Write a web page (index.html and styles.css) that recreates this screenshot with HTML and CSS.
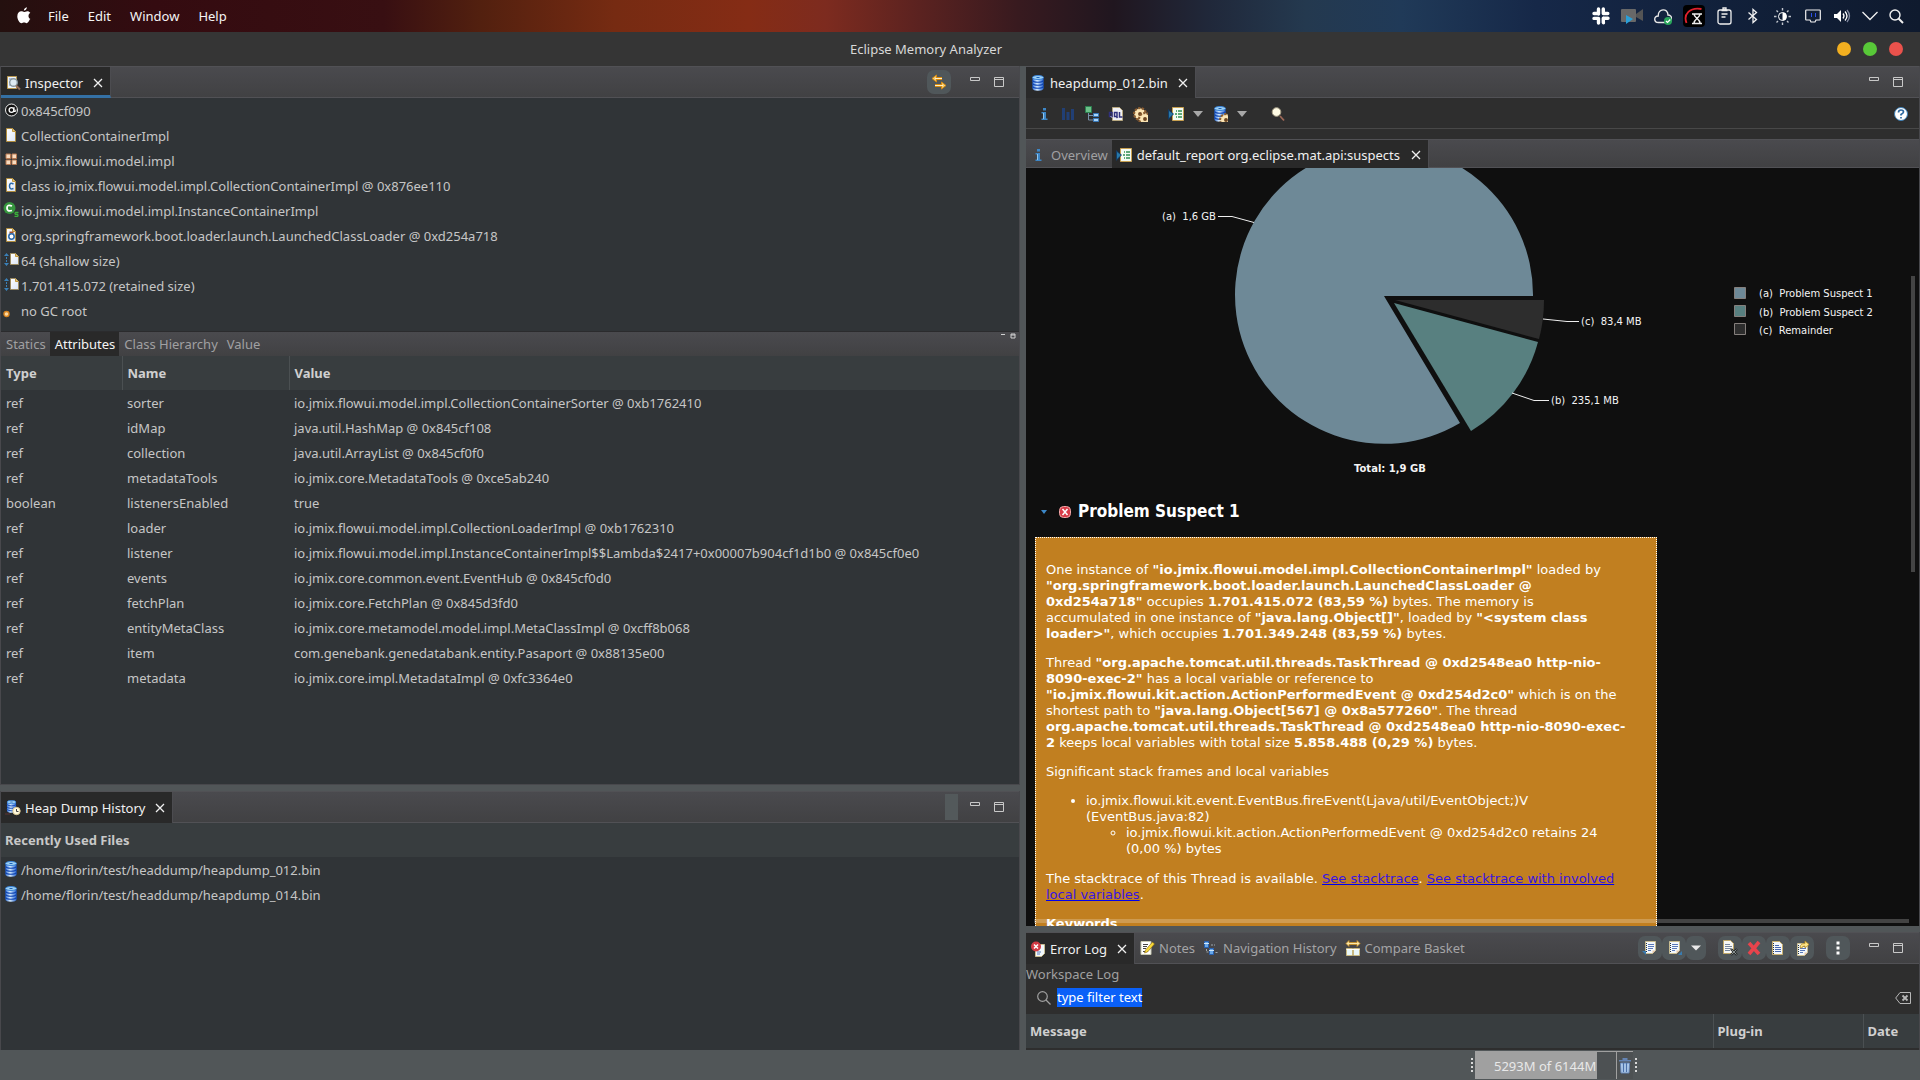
FILE: index.html
```
<!DOCTYPE html>
<html lang="en">
<head>
<meta charset="utf-8">
<title>Eclipse Memory Analyzer</title>
<link rel="stylesheet" href="styles.css">
</head>
<body>
<svg class="sprites" aria-hidden="true">
  <defs>
    <linearGradient id="paper" x1="0" y1="0" x2="1" y2="1"><stop offset="0" stop-color="#fff"/><stop offset="1" stop-color="#dbe6f8"/></linearGradient>
    <linearGradient id="cyl" x1="0" x2="1"><stop offset="0" stop-color="#2f6fd8"/><stop offset=".4" stop-color="#d6ecff"/><stop offset="1" stop-color="#2463cf"/></linearGradient>
  </defs>
  <symbol id="close" viewBox="0 0 10 10"><path d="M1 1l8 8M9 1l-8 8" stroke="#f0f0f0" stroke-width="1.3" fill="none"/></symbol>
  <symbol id="min" viewBox="0 0 10 10"><path d="M.5 .5h9v3h-9z" stroke="#c8c8c8" fill="none"/></symbol>
  <symbol id="max" viewBox="0 0 10 10"><path d="M.5 .5h9v9h-9zM0 2.5h10" stroke="#c8c8c8" fill="none"/></symbol>
  <symbol id="page" viewBox="0 0 16 16"><path d="M3.500 1.500h6l3 3v10h-9z" fill="url(#paper)" stroke="#b08c3c"/><path d="M9.500 1.500v3h3" fill="#e8c878" stroke="#c09840"/></symbol>
  <symbol id="db" viewBox="0 0 16 16">
    <path d="M2.500 2.500v11c0 3 11 3 11 0v-11z" fill="url(#cyl)"/>
    <path d="M2.500 5.500c1 2.300 10 2.300 11 0M2.500 8.500c1 2.300 10 2.300 11 0M2.500 11.500c1 2.300 10 2.300 11 0" stroke="#1146b4" stroke-width="1.200" fill="none"/>
    <ellipse cx="8" cy="2.500" rx="5.500" ry="2" fill="#9cd0f4" stroke="#3a84d8"/><path d="M6.500 2.500h3" stroke="#1f62b8"/>
  </symbol>
  <symbol id="info" viewBox="0 0 16 16"><path d="M7 2h3v2.500h-3zM5.500 6h4.500v6.500h1.500v1.500h-6v-1.500h1.500v-5h-1.500z" fill="#3d86c6"/><path d="M7.500 7v6" stroke="#8cc4ee"/></symbol>
  <symbol id="report" viewBox="0 0 16 16"><path d="M4.500 1.500h11v13h-11z" fill="#f4fbf4" stroke="#c8a050"/><path d="M8 5h1m1 0h4M7 8h2m1 0h4M8 11h1m1 0h4" stroke="#2e8f50" stroke-width="1.300"/><path d="M0 3l6 5-6 6z" fill="#123c66"/><path d="M1 5l4 3-4 4z" fill="#2878a8"/></symbol>
  <symbol id="gear" viewBox="0 0 10 10"><circle cx="5" cy="5" r="3.600" fill="#fbe5b4" stroke="#8a5c30" stroke-width="1.600" stroke-dasharray="1.400 .8"/><circle cx="5" cy="5" r="3" fill="#fbe5b4"/><circle cx="5" cy="5" r="1.200" fill="#6c4420"/></symbol>
  <symbol id="down" viewBox="0 0 10 6"><path d="M0 0h10l-5 6z" fill="#a8a8a8"/></symbol>
  <symbol id="log" viewBox="0 0 16 16"><path d="M3.500 1.500h10v9l-3 3h-7z" fill="#f2f8fc" stroke="#c9bd90"/><path d="M6 4.500h6M6 6.500h6M6 8.500h5M6 10.500h3" stroke="#5878b8"/><path d="M4.500 3v10" stroke="#234" stroke-dasharray="1 1"/><path d="M13.500 10.500h-3v3z" fill="#e8c8a8"/></symbol>
  <symbol id="size" viewBox="0 0 16 16"><path d="M7.500 1.500h5l3 3v8h-8z" fill="url(#paper)" stroke="#9c8c64"/><path d="M12.500 1.500v3h3" fill="#e8c878" stroke="#c09840"/><path d="M3.500 2v11" stroke="#3a80b8" stroke-dasharray="2 1"/><path d="M1 4l2.500-3 2.500 3zM1 11l2.500 3 2.500-3z" fill="#3a80b8"/></symbol>
</svg>

<header class="menubar">
  <nav class="menus">
    <button aria-label="System"><svg width="14" height="17" viewBox="0 0 14 17"><path d="M9.900.3c.1 1.400-1.300 3.300-3 3.300C6.700 2.100 8.200.5 9.900.3zM12.700 12.600c-.7 1.800-1.900 3.600-3.100 3.600-1 0-1.300-.6-2.500-.6s-1.600.6-2.500.6C2.700 16.200.3 12.600.3 9.200c0-3.100 2-4.900 4-4.900 1.200 0 2 .7 2.800.7s1.700-.8 3.200-.8c1.200 0 2.300.6 3 1.600-2.600 1.500-2.200 5.500.1 6.200z" fill="#fff"/></svg></button>
    <button>File</button><button>Edit</button><button>Window</button><button>Help</button>
  </nav>
  <div class="tray">
    <svg width="18" height="20" viewBox="1 0 18 20"><g stroke="#fff" stroke-width="3.400" stroke-linecap="round"><path d="M7.500 3v5M3 7.500h.1M12.300 3v4.500M16.800 7.500h-4.300M12.500 12.300h4.500M12.500 16.800v-.1M7.500 12.500v4.500M3 12.400h4.500M3 7.500h4.500M12.300 12.300v4.300"/></g></svg>
    <svg width="22" height="18" viewBox="0 0 22 18"><rect y="2" width="15" height="13" rx="1" fill="#686868"/><path d="M15 7l7-5v12l-7-4z" fill="#555"/><path d="M5 8l7 4-7 5z" fill="#2a9fd8"/></svg>
    <svg width="18" height="17" viewBox="0 0 18 17"><path d="M4.500 14.500c-5 0-5-6.500-.3-6.500C4 0 14 0 14 7c5 0 4.500 7.500 0 7.500z" fill="none" stroke="#e8e8e8" stroke-width="1.400"/><circle cx="14" cy="13" r="4" fill="#27a55a"/><path d="M12 13l1.500 1.500 2.800-3" stroke="#fff" stroke-width="1.200" fill="none"/></svg>
    <svg width="22" height="22" viewBox="0 0 22 22"><rect width="22" height="22" rx="4" fill="#000"/><path d="M3.500 18C0 9 7 2 18.500 4" stroke="#e0202c" stroke-width="1.800" fill="none"/><path d="M9 9h10M9 18.500h10M11 9c0 4 6 5 6 9M17 9c0 4-6 5-6 9" stroke="#eee" stroke-width="1.500" fill="none"/></svg>
    <svg width="18" height="18" viewBox="-1 0 18 18"><rect x="1" y="3" width="13" height="14" rx="2" fill="none" stroke="#f0f0f0" stroke-width="1.300"/><path d="M4.500 3.500h6M6 1h3v2H6zM4.500 7h6M4.500 10h4" stroke="#f0f0f0" stroke-width="1.300" fill="none"/></svg>
    <svg width="16" height="16" viewBox="-2 0 16 16"><path d="M1.500 4.500l8 7-3.500 3V1.500l3.500 3-8 7" fill="none" stroke="#f0f0f0" stroke-width="1.300"/></svg>
    <svg width="21" height="17" viewBox="-2 0 21 17"><circle cx="8.500" cy="8.500" r="4" fill="none" stroke="#fff"/><path d="M8.500 4.500a4 4 0 0 1 0 8z" fill="#fff"/><path d="M8.500 0v2.500M8.500 14.500V17M0 8.500h2.500M14.500 8.500H17M2.500 2.500l1.500 1.500M13 13l1.500 1.500M14.500 2.500L13 4M4 13l-1.500 1.500" stroke="#c0c4cc" stroke-width="1.400"/></svg>
    <svg width="18" height="16" viewBox="-1 0 18 16"><path d="M1.500 2h13q.8 0 .8.800v8.400q0 .8-.8.800h-3.500l-1 2h-4l-1-2H1.500q-.8 0-.8-.8V2.800q0-.8.8-.8z" fill="none" stroke="#f0f0f0" stroke-width="1.200"/><path d="M6.500 5v4M10.500 5v4" stroke="#2d50e8"/></svg>
    <svg width="18" height="14" viewBox="0 0 18 14"><path d="M1 5h3l4-4v12l-4-4h-3z" fill="#fff"/><path d="M10 4.500q2 2.500 0 5M12 2.500q4 4.500 0 9" stroke="#fff" stroke-width="1.300" fill="none"/><path d="M14 1q5 6 0 12" stroke="#8089a0" stroke-width="1.300" fill="none"/></svg>
    <svg width="16" height="10" viewBox="0 0 16 10"><path d="M.5 1L8 8.500 15.500 1" fill="none" stroke="#f0f0f0" stroke-width="1.300"/></svg>
    <svg width="15" height="15" viewBox="0 0 15 15"><circle cx="6" cy="6" r="5" fill="none" stroke="#f0f0f0" stroke-width="1.400"/><path d="M9.500 9.500L14 14" stroke="#f0f0f0" stroke-width="2"/></svg>
  </div>
</header>

<div class="titlebar">
  <h1>Eclipse Memory Analyzer</h1>
  <div class="lights"><button class="amber" aria-label="Minimize window"></button><button class="green" aria-label="Maximize window"></button><button class="red" aria-label="Close window"></button></div>
</div>

<main class="workbench">
  <div class="column left">
    <section class="view inspector">
      <div class="tabbar">
        <div class="tab active focus"><svg width="16" height="16" viewBox="0 0 16 16"><path d="M2.500 1.500h9v12h-9z" fill="#eef4fc" stroke="#b89850"/><path d="M4 4h3M4 7h2M4 10h3" stroke="#6a8cc0"/><circle cx="8.500" cy="7.500" r="3.800" fill="#dfeaf2" stroke="#8a98a0" stroke-width="1.400"/><path d="M11 10.500l4 4" stroke="#96705c" stroke-width="2"/></svg><button>Inspector</button><button class="x" aria-label="Close"><svg><use href="#close"/></svg></button></div>
        <div class="tools"><button class="tool swap" aria-label="Link with snapshot"><svg width="16" height="16" viewBox="0 0 16 16"><path d="M5 4.500h6M4 11.500h7" stroke="#d88c10" stroke-width="3"/><path d="M1 4.500L5.500 1v7zM15 11.500L10.500 8v7z" fill="#f4cc70" stroke="#d88c10"/><path d="M4 4.500h7M4 11.500h8" stroke="#fff0c8"/></svg></button><button class="winbtn" aria-label="Minimize"><svg><use href="#min"/></svg></button><button class="winbtn" aria-label="Maximize"><svg><use href="#max"/></svg></button></div>
      </div>
      <ul class="tree">
        <li><svg viewBox="0 0 16 16"><circle cx="8.500" cy="8" r="6" fill="#111" stroke="#eee"/><circle cx="8.500" cy="8" r="2.400" fill="none" stroke="#fff" stroke-width="1.300"/><path d="M11 5v4.500q2 1 2-2" stroke="#fff" fill="none"/></svg>0x845cf090</li>
        <li><svg><use href="#page"/></svg>CollectionContainerImpl</li>
        <li><svg viewBox="0 0 16 16"><path d="M3 2h4.500v4.500H3zM9 2h4.500v4.500H9zM3 8h4.500v4.500H3zM9 8h4.500v4.500H9z" fill="#f8dcc0" stroke="#b87850"/></svg>io.jmix.flowui.model.impl</li>
        <li><svg viewBox="0 0 16 16"><use href="#page"/><path d="M10.500 7q-4-2-4 2t4 2.500" stroke="#2868a8" stroke-width="1.500" fill="none"/></svg>class io.jmix.flowui.model.impl.CollectionContainerImpl @ 0x876ee110</li>
        <li><svg viewBox="0 0 16 16"><circle cx="6.500" cy="6" r="6" fill="#36963e"/><path d="M9 4q-5-2-5 2t5 2.500" stroke="#fff" stroke-width="1.800" fill="none"/><path d="M15.500 10.500h-3q-1 1 0 1.800h2q1 1.200 0 2h-3" stroke="#3ab03a" stroke-width="1.300" fill="none"/></svg>io.jmix.flowui.model.impl.InstanceContainerImpl</li>
        <li><svg viewBox="0 0 16 16"><use href="#page"/><path d="M6.500 4.500h4v2h-4z" fill="#9c4c28"/><circle cx="8.500" cy="9.500" r="2.700" fill="#fff" stroke="#2868a8" stroke-width="1.500"/></svg>org.springframework.boot.loader.launch.LaunchedClassLoader @ 0xd254a718</li>
        <li><svg><use href="#size"/></svg>64 (shallow size)</li>
        <li><svg><use href="#size"/></svg>1.701.415.072 (retained size)</li>
        <li><svg viewBox="0 0 16 16"><circle cx="3.500" cy="12" r="2.500" fill="#fcd8a0" stroke="#d88420" stroke-width="1.400"/></svg>no GC root</li>
      </ul>
      <div class="subtabs"><button>Statics</button><button class="active">Attributes</button><button>Class Hierarchy</button><button>Value</button><span class="mini"><svg width="16" height="6" viewBox="0 0 16 6"><path d="M1 1.500h4M11 1h4v4h-4zM11 2h4" stroke="#d0d0d0" fill="none"/></svg></span></div>
      <div class="grid">
      <table>
        <colgroup><col class="c-type"><col class="c-name"><col></colgroup>
        <thead><tr><th>Type</th><th>Name</th><th>Value</th></tr></thead>
        <tbody>
          <tr><td>ref</td><td>sorter</td><td>io.jmix.flowui.model.impl.CollectionContainerSorter @ 0xb1762410</td></tr>
          <tr><td>ref</td><td>idMap</td><td>java.util.HashMap @ 0x845cf108</td></tr>
          <tr><td>ref</td><td>collection</td><td>java.util.ArrayList @ 0x845cf0f0</td></tr>
          <tr><td>ref</td><td>metadataTools</td><td>io.jmix.core.MetadataTools @ 0xce5ab240</td></tr>
          <tr><td>boolean</td><td>listenersEnabled</td><td>true</td></tr>
          <tr><td>ref</td><td>loader</td><td>io.jmix.flowui.model.impl.CollectionLoaderImpl @ 0xb1762310</td></tr>
          <tr><td>ref</td><td>listener</td><td>io.jmix.flowui.model.impl.InstanceContainerImpl$$Lambda$2417+0x00007b904cf1d1b0 @ 0x845cf0e0</td></tr>
          <tr><td>ref</td><td>events</td><td>io.jmix.core.common.event.EventHub @ 0x845cf0d0</td></tr>
          <tr><td>ref</td><td>fetchPlan</td><td>io.jmix.core.FetchPlan @ 0x845d3fd0</td></tr>
          <tr><td>ref</td><td>entityMetaClass</td><td>io.jmix.core.metamodel.model.impl.MetaClassImpl @ 0xcff8b068</td></tr>
          <tr><td>ref</td><td>item</td><td>com.genebank.genedatabank.entity.Pasaport @ 0x88135e00</td></tr>
          <tr><td>ref</td><td>metadata</td><td>io.jmix.core.impl.MetadataImpl @ 0xfc3364e0</td></tr>
        </tbody>
      </table>
      </div>
    </section>

    <section class="view history">
      <div class="tabbar">
        <div class="tab active"><svg width="16" height="16" viewBox="0 0 16 16"><svg width="13" height="13"><use href="#db"/></svg><circle cx="11.500" cy="11" r="3.700" fill="#fff8dc" stroke="#d8c890"/><path d="M11.500 9v2.500h2" stroke="#444" fill="none"/><path d="M0 14h5" stroke="#5c3434"/></svg><button>Heap Dump History</button><button class="x" aria-label="Close"><svg><use href="#close"/></svg></button></div>
        <div class="tools"><span class="stub"></span><button class="winbtn" aria-label="Minimize"><svg><use href="#min"/></svg></button><button class="winbtn" aria-label="Maximize"><svg><use href="#max"/></svg></button></div>
      </div>
      <h2 class="listhead">Recently Used Files</h2>
      <ul class="tree files">
        <li><svg><use href="#db"/></svg>/home/florin/test/headdump/heapdump_012.bin</li>
        <li><svg><use href="#db"/></svg>/home/florin/test/headdump/heapdump_014.bin</li>
      </ul>
    </section>
  </div>

  <div class="column right">
    <section class="view editor">
      <div class="tabbar">
        <div class="tab active"><svg width="16" height="16"><use href="#db"/></svg><button>heapdump_012.bin</button><button class="x" aria-label="Close"><svg><use href="#close"/></svg></button></div>
        <div class="tools"><button class="winbtn" aria-label="Minimize"><svg><use href="#min"/></svg></button><button class="winbtn" aria-label="Maximize"><svg><use href="#max"/></svg></button></div>
      </div>
      <div class="toolbar">
        <button aria-label="Overview"><svg><use href="#info"/></svg></button>
        <button aria-label="Histogram"><svg viewBox="0 0 16 16"><path d="M2 2h3v12h-3zM6.500 6h3v8h-3zM11 3h3v11h-3z" fill="#213f74"/></svg></button>
        <button aria-label="Dominator tree"><svg viewBox="0 0 16 16"><path d="M4.500 7v7h5M4.500 9.500h5" stroke="#7890a8" fill="none"/><path d="M1.500 .5h6v6h-6z" fill="#6cc088" stroke="#2c8050"/><path d="M9.500 7.500h5v3h-5zM9.500 12.500h5v3h-5z" fill="#a8d4f8" stroke="#3878b8"/></svg></button>
        <button aria-label="OQL"><svg viewBox="0 0 16 16"><path d="M4.500 1.500h7l3 3v10h-10z" fill="#f0f0f4" stroke="#b8a880"/><path d="M1.500 6.500h2.500v4h-2.500zM6.500 6.500h2.500v4h-2.500zM8 10l1.500 2M11.500 6v5h3" stroke="#30307c" stroke-width="1.500" fill="none"/><path d="M2.500 10l2 2" stroke="#b8b8e0"/></svg></button>
        <button class="wide" aria-label="Thread overview"><svg viewBox="0 0 16 16"><svg width="11" height="11"><use href="#gear"/></svg><svg x="5" y="5" width="11" height="11"><use href="#gear"/></svg></svg></button>
        <button aria-label="Run report"><svg><use href="#report"/></svg></button>
        <button class="drop" aria-label="Report menu"><svg><use href="#down"/></svg></button>
        <button aria-label="Query browser"><svg viewBox="0 0 16 16"><svg width="13" height="14"><use href="#db"/></svg><svg x="6" y="6" width="10" height="10"><use href="#gear"/></svg></svg></button>
        <button class="drop last" aria-label="Query menu"><svg><use href="#down"/></svg></button>
        <button aria-label="Find object"><svg viewBox="0 0 16 16"><circle cx="6.500" cy="6" r="4.300" fill="#fffbe4" stroke="#a8a088"/><path d="M10 10l4 4.500" stroke="#9c6858" stroke-width="1.800"/></svg></button>
        <button class="help" aria-label="Help"><svg viewBox="0 0 16 16"><circle cx="8" cy="8" r="6.500" fill="#fff" stroke="#3c80b8"/><path d="M5.500 6.500q0-2.500 2.500-2.500t2.500 2q0 1-2.500 2.500v1M8 11v1.500" stroke="#2c68a0" stroke-width="1.700" fill="none"/></svg></button>
      </div>
      <div class="pagetabs">
        <div class="tab"><svg width="16" height="16"><use href="#info"/></svg><button>Overview</button></div>
        <div class="tab active"><svg width="16" height="16"><use href="#report"/></svg><button>default_report org.eclipse.mat.api:suspects</button><button class="x" aria-label="Close"><svg><use href="#close"/></svg></button></div>
      </div>
      <div class="browser">
        <svg class="chart" width="880" height="320" viewBox="0 0 880 320" role="img" aria-label="Leak suspects">
          <path d="M358 128H507A149 149 0 1 0 434 255z" fill="#6e8997"/>
          <path d="M368 135L512 174A149 149 0 0 1 445 263z" fill="#588080"/>
          <path d="M369 132H518A149 149 0 0 1 513 171z" fill="#2d2d2d"/>
          <path d="M192 48.500h14l22 6M517 151l24 2.500h12M486 225l22 7.500h15" fill="none" stroke="#eee"/>
          <path d="M708.500 119.500h11v11h-11z" fill="#6e8997" stroke="#857f7c"/>
          <path d="M708.500 137.500h11v11h-11z" fill="#588080" stroke="#857f7c"/>
          <path d="M708.500 155.500h11v11h-11z" fill="#2d2d2d" stroke="#857f7c"/>
          <g class="labels">
            <text x="136" y="52">(a)&nbsp; 1,6 GB</text><text x="555" y="157">(c)&nbsp; 83,4 MB</text><text x="525" y="236">(b)&nbsp; 235,1 MB</text>
            <text x="733" y="129">(a)&nbsp; Problem Suspect 1</text><text x="733" y="148">(b)&nbsp; Problem Suspect 2</text><text x="733" y="166">(c)&nbsp; Remainder</text>
            <text class="total" x="328" y="304">Total: 1,9 GB</text>
          </g>
        </svg>
        <h2><svg width="6" height="4" viewBox="0 0 6 4"><path d="M0 0h6l-3 4z" fill="#3c88c8"/></svg><svg width="12" height="12" viewBox="0 0 12 12"><rect x=".5" y=".5" width="11" height="11" rx="4" fill="#d83c48" stroke="#f0a8a8"/><path d="M3.500 3l5 6M8.500 3l-5 6" stroke="#fff" stroke-width="1.500"/></svg>Problem Suspect 1</h2>
        <article class="suspect">
          <p>One instance of <b>"io.jmix.flowui.model.impl.CollectionContainerImpl"</b> loaded by<br><b>"org.springframework.boot.loader.launch.LaunchedClassLoader @<br>0xd254a718"</b> occupies <b>1.701.415.072 (83,59 %)</b> bytes. The memory is<br>accumulated in one instance of <b>"java.lang.Object[]"</b>, loaded by <b>"&lt;system class<br>loader&gt;"</b>, which occupies <b>1.701.349.248 (83,59 %)</b> bytes.</p>
          <p>Thread <b>"org.apache.tomcat.util.threads.TaskThread @ 0xd2548ea0 http-nio-<br>8090-exec-2"</b> has a local variable or reference to<br><b>"io.jmix.flowui.kit.action.ActionPerformedEvent @ 0xd254d2c0"</b> which is on the<br>shortest path to <b>"java.lang.Object[567] @ 0x8a577260"</b>. The thread<br><b>org.apache.tomcat.util.threads.TaskThread @ 0xd2548ea0 http-nio-8090-exec-<br>2</b> keeps local variables with total size <b>5.858.488 (0,29 %)</b> bytes.</p>
          <p>Significant stack frames and local variables</p>
          <ul><li>io.jmix.flowui.kit.event.EventBus.fireEvent(Ljava/util/EventObject;)V<br>(EventBus.java:82)
            <ul><li>io.jmix.flowui.kit.action.ActionPerformedEvent @ 0xd254d2c0 retains 24<br>(0,00 %) bytes</li></ul></li></ul>
          <p>The stacktrace of this Thread is available. <a href="#stack">See stacktrace</a>. <a href="#locals">See stacktrace with involved<br>local variables</a>.</p>
          <p><b>Keywords</b></p>
        </article>
        <span class="vbar"></span><span class="hbar"></span>
      </div>
    </section>

    <section class="view errors">
      <div class="tabbar">
        <div class="tab active"><svg width="16" height="16" viewBox="0 0 16 16"><path d="M5.500 3.500h9v9l-3 3h-6z" fill="#f2f8fc" stroke="#c9bd90"/><path d="M7 11h4M7 13h3" stroke="#5878b8"/><circle cx="6" cy="5.500" r="5" fill="#d23a44"/><path d="M4 3.500l4 4M8 3.500l-4 4" stroke="#fff" stroke-width="1.500"/></svg><button>Error Log</button><button class="x" aria-label="Close"><svg><use href="#close"/></svg></button></div>
        <div class="tab"><svg width="16" height="16" viewBox="0 0 16 16"><path d="M2 1.500h10v13h-10z" fill="#fff" stroke="#c8c8b0"/><path d="M4 4.500h5M4 6.500h4M4 8.500h3M4 11.500h5" stroke="#444"/><path d="M13.500 2l2 2-7 8-3 1 1-3z" fill="#f8d838" stroke="#806010" stroke-width=".6"/></svg><button>Notes</button></div>
        <div class="tab"><svg width="16" height="16" viewBox="0 0 16 16"><path d="M1.500 1.500h4v6h-4zM6.500 8.500h4v6h-4z" fill="#68a8e8" stroke="#2860b0"/><path d="M1 3.500h5M6 10.500h5" stroke="#cfe6fa"/><path d="M8 5h4M3.500 9v3h2M12.500 12.500h3" stroke="#a0a8b0" stroke-dasharray="2 1" fill="none"/></svg><button>Navigation History</button></div>
        <div class="tab"><svg width="16" height="16" viewBox="0 0 16 16"><path d="M1 3.500L4 .5v2h8v-2l3 3-3 3v-2H4v2z" fill="#fce8a8" stroke="#c88c20" stroke-width=".8"/><path d="M1.500 8.500h6v7h-6zM8.500 8.500h6v7h-6z" fill="#e8f6f8" stroke="#c8b880"/><path d="M1.500 9.500h13" stroke="#fff"/></svg><button>Compare Basket</button></div>
        <div class="tools">
          <button class="tool" aria-label="Export log"><svg viewBox="0 0 16 16"><use href="#log"/><path d="M0 11h4v4z" fill="#3a7cb0"/></svg></button><button class="tool" aria-label="Import log"><svg viewBox="0 0 16 16"><use href="#log"/><path d="M16 11v4h-4z" fill="#3a7cb0"/></svg></button><button class="tool narrow" aria-label="Log menu"><svg viewBox="0 0 16 16"><path d="M3 5.500h10l-5 5z" fill="#e8e8e8"/></svg></button>
          <button class="tool gap" aria-label="Clear log viewer"><svg viewBox="0 0 16 16"><path d="M1.500 .5h7l3 3v10h-10z" fill="#f8f8f4" stroke="#c0a868"/><path d="M3 4.500h5M3 6.500h7M3 8.500h6M3 10.500h5" stroke="#7888a0"/><path d="M9 9l6 6M15 9l-6 6" stroke="#282c2c" stroke-width="2.400"/><path d="M9.500 9.500l5 5M14.500 9.500l-5 5" stroke="#889090"/></svg></button><button class="tool" aria-label="Delete log"><svg viewBox="0 0 16 16"><path d="M3 3l10 11M13 2L3 14" stroke="#e8444c" stroke-width="3.600"/></svg></button><button class="tool" aria-label="Open log"><svg viewBox="0 0 16 16"><path d="M2.500 1.500h7l3 3v10h-10z" fill="#f4f8fc" stroke="#c9b070"/><path d="M5 5.500h4M5 7.500h6M5 9.500h6M5 11.500h6" stroke="#4868b0"/><path d="M3.500 3v11" stroke="#234" stroke-dasharray="1 1"/></svg></button><button class="tool" aria-label="Restore log"><svg viewBox="0 0 16 16"><svg y="2" width="14" height="14"><use href="#log"/></svg><path d="M6 7.500q0-4 5-4V1l4 3.500-4 3.500V6q-3 0-3 2z" fill="#fce488" stroke="#b88c20" stroke-width=".8"/></svg></button>
          <button class="tool gap" aria-label="View menu"><svg viewBox="0 0 16 16"><path d="M6.500 1.500h3v3h-3zM6.500 6.500h3v3h-3zM6.500 11.500h3v3h-3z" fill="#fff"/></svg></button>
          <button class="winbtn" aria-label="Minimize"><svg><use href="#min"/></svg></button><button class="winbtn" aria-label="Maximize"><svg><use href="#max"/></svg></button>
        </div>
      </div>
      <label class="logname" for="filter">Workspace Log</label>
      <div class="filter"><svg width="14" height="14" viewBox="0 0 14 14"><circle cx="5.500" cy="5.500" r="4.800" fill="none" stroke="#a0a0a0" stroke-width="1.200"/><path d="M9 9l4.500 4.500" stroke="#a0a0a0" stroke-width="1.200"/></svg><input id="filter" type="text" value="type filter text"><button aria-label="Clear filter"><svg width="16" height="12" viewBox="0 0 16 12"><path d="M5 .5h10.500v11H5L.7 6z" fill="none" stroke="#b8b8b8"/><path d="M7.500 3.500l5 5M12.500 3.500l-5 5" stroke="#b8b8b8" stroke-width="1.800"/></svg></button></div>
      <table class="log"><colgroup><col><col class="c-plugin"><col class="c-date"></colgroup><thead><tr><th>Message</th><th>Plug-in</th><th>Date</th></tr></thead></table>
    </section>
  </div>
</main>

<footer class="status">
  <span class="grip"></span>
  <div class="heap"><span class="meter">5293M of 6144M</span><button aria-label="Run garbage collector"><svg width="12" height="16" viewBox="0 0 12 16"><path d="M0 2h12v1.500h-12zM3.500 0h5v2h-5z" fill="#6484b4"/><path d="M1.500 5h9l-.5 10h-8z" fill="#b4d0f0" stroke="#6484b4"/><path d="M4.500 5v9M7.500 5v9" stroke="#4c70a8" stroke-width="1.300"/></svg></button></div>
  <span class="grip"></span>
</footer>
<script>
const filter = document.getElementById('filter');
filter.focus();
filter.select();
</script>
</body>
</html>
```
FILE: styles.css
```
* { box-sizing: border-box; }
body {
  margin: 0;
  height: 100vh;
  display: flex;
  flex-direction: column;
  overflow: hidden;
  background: #515658;
  color: #c6c6c6;
  font: 13px/18px "Noto Sans", sans-serif;
}
button, input { font: inherit; color: inherit; background: none; border: 0; padding: 0; margin: 0; }
svg { display: block; flex: none; }
ul { margin: 0; padding: 0; }
.sprites { position: absolute; width: 0; height: 0; }

.menubar {
  height: 32px;
  flex: none;
  display: flex;
  align-items: center;
  justify-content: space-between;
  color: #f4f4f4;
  background: linear-gradient(90deg, #24100f 0%, #340b10 8%, #380f12 20%, #52200f 25%, #762b12 32%, #852c15 39%, #7d2b1f 43%, #5a2220 48%, #381a1f 53%, #20161f 58%, #20283a 63%, #24394f 68%, #203a58 73%, #162848 80%, #11203a 90%, #0f1a2e 100%);
}
.menus { display: flex; align-items: center; padding: 0 0 1px 17px; gap: 19px; }
.menus button:first-child { margin-right: -2px; }
.tray { display: flex; align-items: center; gap: 11px; padding-right: 16px; }

.titlebar {
  height: 34px;
  flex: none;
  display: grid;
  grid-template-columns: 1fr auto 1fr;
  align-items: center;
  background: #353535;
  color: #d8d8d8;
}
.titlebar h1 { grid-column: 2; margin: 0 0 1px -68px; font-size: 13px; font-weight: 400; line-height: 18px; }
.lights { display: flex; justify-content: flex-end; gap: 12px; padding-right: 17px; }
.lights button { width: 14px; height: 14px; border-radius: 50%; }
.amber { background: #f2af20; }
.green { background: #58c838; }
.red { background: #ea524c; }

.workbench { flex: 1; min-height: 0; display: grid; grid-template-columns: 1020fr 894fr; gap: 6px; }
.column { display: flex; flex-direction: column; gap: 6px; min-width: 0; min-height: 0; }
.view { display: flex; flex-direction: column; min-height: 0; min-width: 0; overflow: hidden; border: solid #48484c; border-width: 0 1px; }
.inspector { flex: 719; background: #303437; }
.history { flex: 259; background: #303437; }
.editor { flex: 1; background: #2e2e2e; border-left: 0; }
.errors { flex: none; background: #2e2e2e; border-left: 0; padding-bottom: 2px; }

.tabbar { height: 32px; flex: none; display: flex; background: linear-gradient(#4a4a4e, #414143); border: solid #515155; border-width: 1px 0; color: #a4a4a6; }
.tab { display: flex; align-items: center; gap: 4px; padding: 0 4px; white-space: nowrap; }
.tab.active { background: #292929; color: #f0f0f0; border-right: 1px solid #4c4c50; margin-bottom: -1px; }
.tab.active.focus { border-bottom: 3px solid #3470a4; padding-top: 3px; }
.tab .x { width: 16px; height: 18px; display: grid; place-items: center; margin-left: 3px; }
.x svg { width: 10px; height: 10px; }
.tools { margin-left: auto; display: flex; align-items: center; padding-right: 15px; }
.right .tools { padding-right: 16px; }
.tool { width: 24px; height: 24px; border-radius: 7px; background: #50575a; display: grid; place-items: center; }
.tool svg { width: 16px; height: 16px; }
.tool.narrow { width: 20px; }
.tool.gap { margin-left: 12px; }
.winbtn { width: 10px; height: 10px; margin-left: 14px; }
.tool + .winbtn { margin-left: 19px; }
.winbtn svg { width: 10px; height: 10px; }
.stub { width: 13px; height: 26px; background: #53595b; }
.stub + .winbtn { margin-left: 12px; }

.tree { list-style: none; padding-bottom: 8px; }
.tree li { height: 25px; display: flex; align-items: center; gap: 2px; padding-left: 2px; white-space: nowrap; }
.tree svg { width: 16px; height: 16px; margin-top: -1px; }
.subtabs { height: 25px; flex: none; display: flex; background: linear-gradient(#4a4a4e, #414143); border: solid #2b2b2d; border-width: 1px 0 0; color: #a0a0a2; }
.subtabs button { padding: 0 4px 0 5px; }
.subtabs .active { background: #292929; color: #f4f4f4; }
.mini { margin: 1px 3px 0 auto; }

.grid { flex: 1; min-height: 0; overflow: hidden; border-bottom: 1px solid #48484c; }
table { width: 100%; border-collapse: collapse; table-layout: fixed; }
.c-type { width: 121px; }
.c-name { width: 167px; }
.c-plugin { width: 150px; }
.c-date { width: 56px; }
th { height: 34px; padding: 0 5px; text-align: left; background: #383d3f; color: #d0d0d0; border-right: 1px solid #4b5052; }
th:last-child { border-right: 0; }
.log th { padding: 0 4px; }
td { height: 25px; padding: 0 5px; white-space: nowrap; }
.listhead { height: 34px; flex: none; margin: 0; padding: 0 4px; display: flex; align-items: center; background: #383d3f; color: #c8c8c8; font-size: 13px; }

.toolbar { height: 31px; flex: none; display: flex; align-items: center; gap: 8px; padding: 1px 10px 0; border-bottom: 1px solid #484848; margin-bottom: 10px; }
.toolbar button { width: 16px; height: 16px; }
.toolbar svg { width: 16px; height: 16px; }
.toolbar .wide { margin-right: 12px; }
.toolbar .drop { width: 10px; height: 6px; margin: 0 1px; }
.toolbar .drop svg { width: 10px; height: 6px; }
.toolbar .last { margin-right: 15px; }
.toolbar .help { margin-left: auto; }
.pagetabs { height: 29px; flex: none; display: flex; background: linear-gradient(#4a4a4e, #414143); border: solid #515155; border-width: 1px 0; color: #a0a0a2; }
.pagetabs .tab { gap: 5px; padding-top: 2px; }

.browser { position: relative; flex: 1; min-height: 0; overflow: hidden; background: #0f0f0f; color: #fff; font: 13px/16px "DejaVu Sans", sans-serif; }
.labels { font-size: 10px; fill: #f4f4f4; }
.total { font-weight: 700; }
.browser h2 { display: flex; align-items: center; margin: 13px 0 15px; padding-left: 15px; gap: 12px; font: 700 17px/21px "DejaVu Sans Condensed", sans-serif; }
.browser h2 svg + svg { margin-right: -5px; }
.suspect { width: 622px; max-width: 100%; margin-left: 9px; padding: 24px 10px; background: #c17f20; border: 1px dotted #fff; white-space: nowrap; }
.suspect p { margin: 0 0 13px; }
.suspect ul { padding-left: 40px; margin-bottom: 14px; }
.suspect ul ul { margin-bottom: 0; }
.suspect a { color: #3814e0; text-decoration-color: #0000ee; }
.vbar { position: absolute; right: 4px; top: 108px; width: 4px; height: 296px; background: #444; }
.hbar { position: absolute; left: 8px; right: 10px; bottom: 3px; height: 4px; background: #ffffff38; }

.logname { height: 20px; line-height: 21px; color: #a0a0a0; }
.filter { display: flex; align-items: center; height: 30px; padding: 0 8px 3px 11px; gap: 6px; }
.filter input { flex: 1; height: 19px; line-height: 19px; outline: 0; color: #fff; }
.filter input::selection { background: #0a60f8; color: #fff; }

.status { height: 30px; flex: none; display: flex; justify-content: flex-end; align-items: center; gap: 2px; padding-right: 283px; }
.heap { display: flex; height: 28px; width: 158px; background: #4d5153; border-top: 1px solid #a0a0a0; }
.meter { width: 142px; padding-left: 19px; line-height: 28px; color: #e8e8e8; border-right: 1px solid #a0a0a0; background: linear-gradient(90deg, #a0a0a0 122px, transparent 122px); }
.heap button { flex: 1; display: grid; place-items: center; }
.grip { width: 2px; height: 15px; background: repeating-linear-gradient(#d8d8d8 0 2px, transparent 2px 4px); }
```
